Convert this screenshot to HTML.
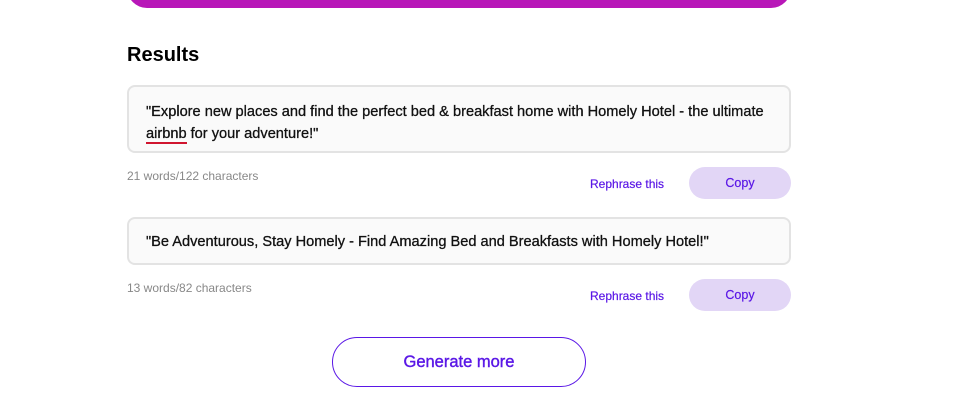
<!DOCTYPE html>
<html><head><style>
body{margin:0;width:975px;height:414px;background:#fff;font-family:"Liberation Sans",sans-serif;position:relative;overflow:hidden;color:#111}
.a{position:absolute}
.bar{left:127px;top:-30px;width:664px;height:38px;background:#b817b8;border-radius:0 0 20px 20px}
h2{position:absolute;left:127px;top:44px;margin:0;font-size:20px;font-weight:bold;color:#000}
.box{position:absolute;left:127px;width:664px;border:2px solid #e3e3e3;border-radius:8px;background:#fafafa;font-size:14.6px;line-height:22px;box-sizing:border-box;padding:0 17px;-webkit-text-stroke:0.3px #111}
.meta{font-size:12px;color:#888}
.rp{font-size:12px;color:#5a17e6;-webkit-text-stroke:0.2px #5a17e6}
.copy{position:absolute;left:689px;width:102px;height:32px;border-radius:16px;background:#e2d6f6;color:#5a17e6;font-size:12.5px;text-align:center;line-height:32px;-webkit-text-stroke:0.2px #5a17e6}
.gen{left:332px;top:337px;width:254px;height:50px;border:1.5px solid #5a17e6;border-radius:25px;box-sizing:border-box;color:#5a17e6;font-size:16.5px;text-align:center;line-height:48px;-webkit-text-stroke:0.4px #5a17e6}
u{text-decoration:none;border-bottom:2px solid #d0152f}
</style></head><body>
<div class="a bar"></div>
<h2>Results</h2>
<div class="box" style="top:85px;height:68px;padding-top:14px">"Explore new places and find the perfect bed &amp; breakfast home with Homely Hotel - the ultimate <u>airbnb</u> for your adventure!"</div>
<div class="a meta" style="left:127px;top:169px">21 words/122 characters</div>
<div class="a rp" style="left:590px;top:177px">Rephrase this</div>
<div class="copy" style="top:167px">Copy</div>
<div class="box" style="top:217px;height:48px;padding-top:12px">"Be Adventurous, Stay Homely - Find Amazing Bed and Breakfasts with Homely Hotel!"</div>
<div class="a meta" style="left:127px;top:281px">13 words/82 characters</div>
<div class="a rp" style="left:590px;top:289px">Rephrase this</div>
<div class="copy" style="top:279px">Copy</div>
<div class="a gen">Generate more</div>
</body></html>
